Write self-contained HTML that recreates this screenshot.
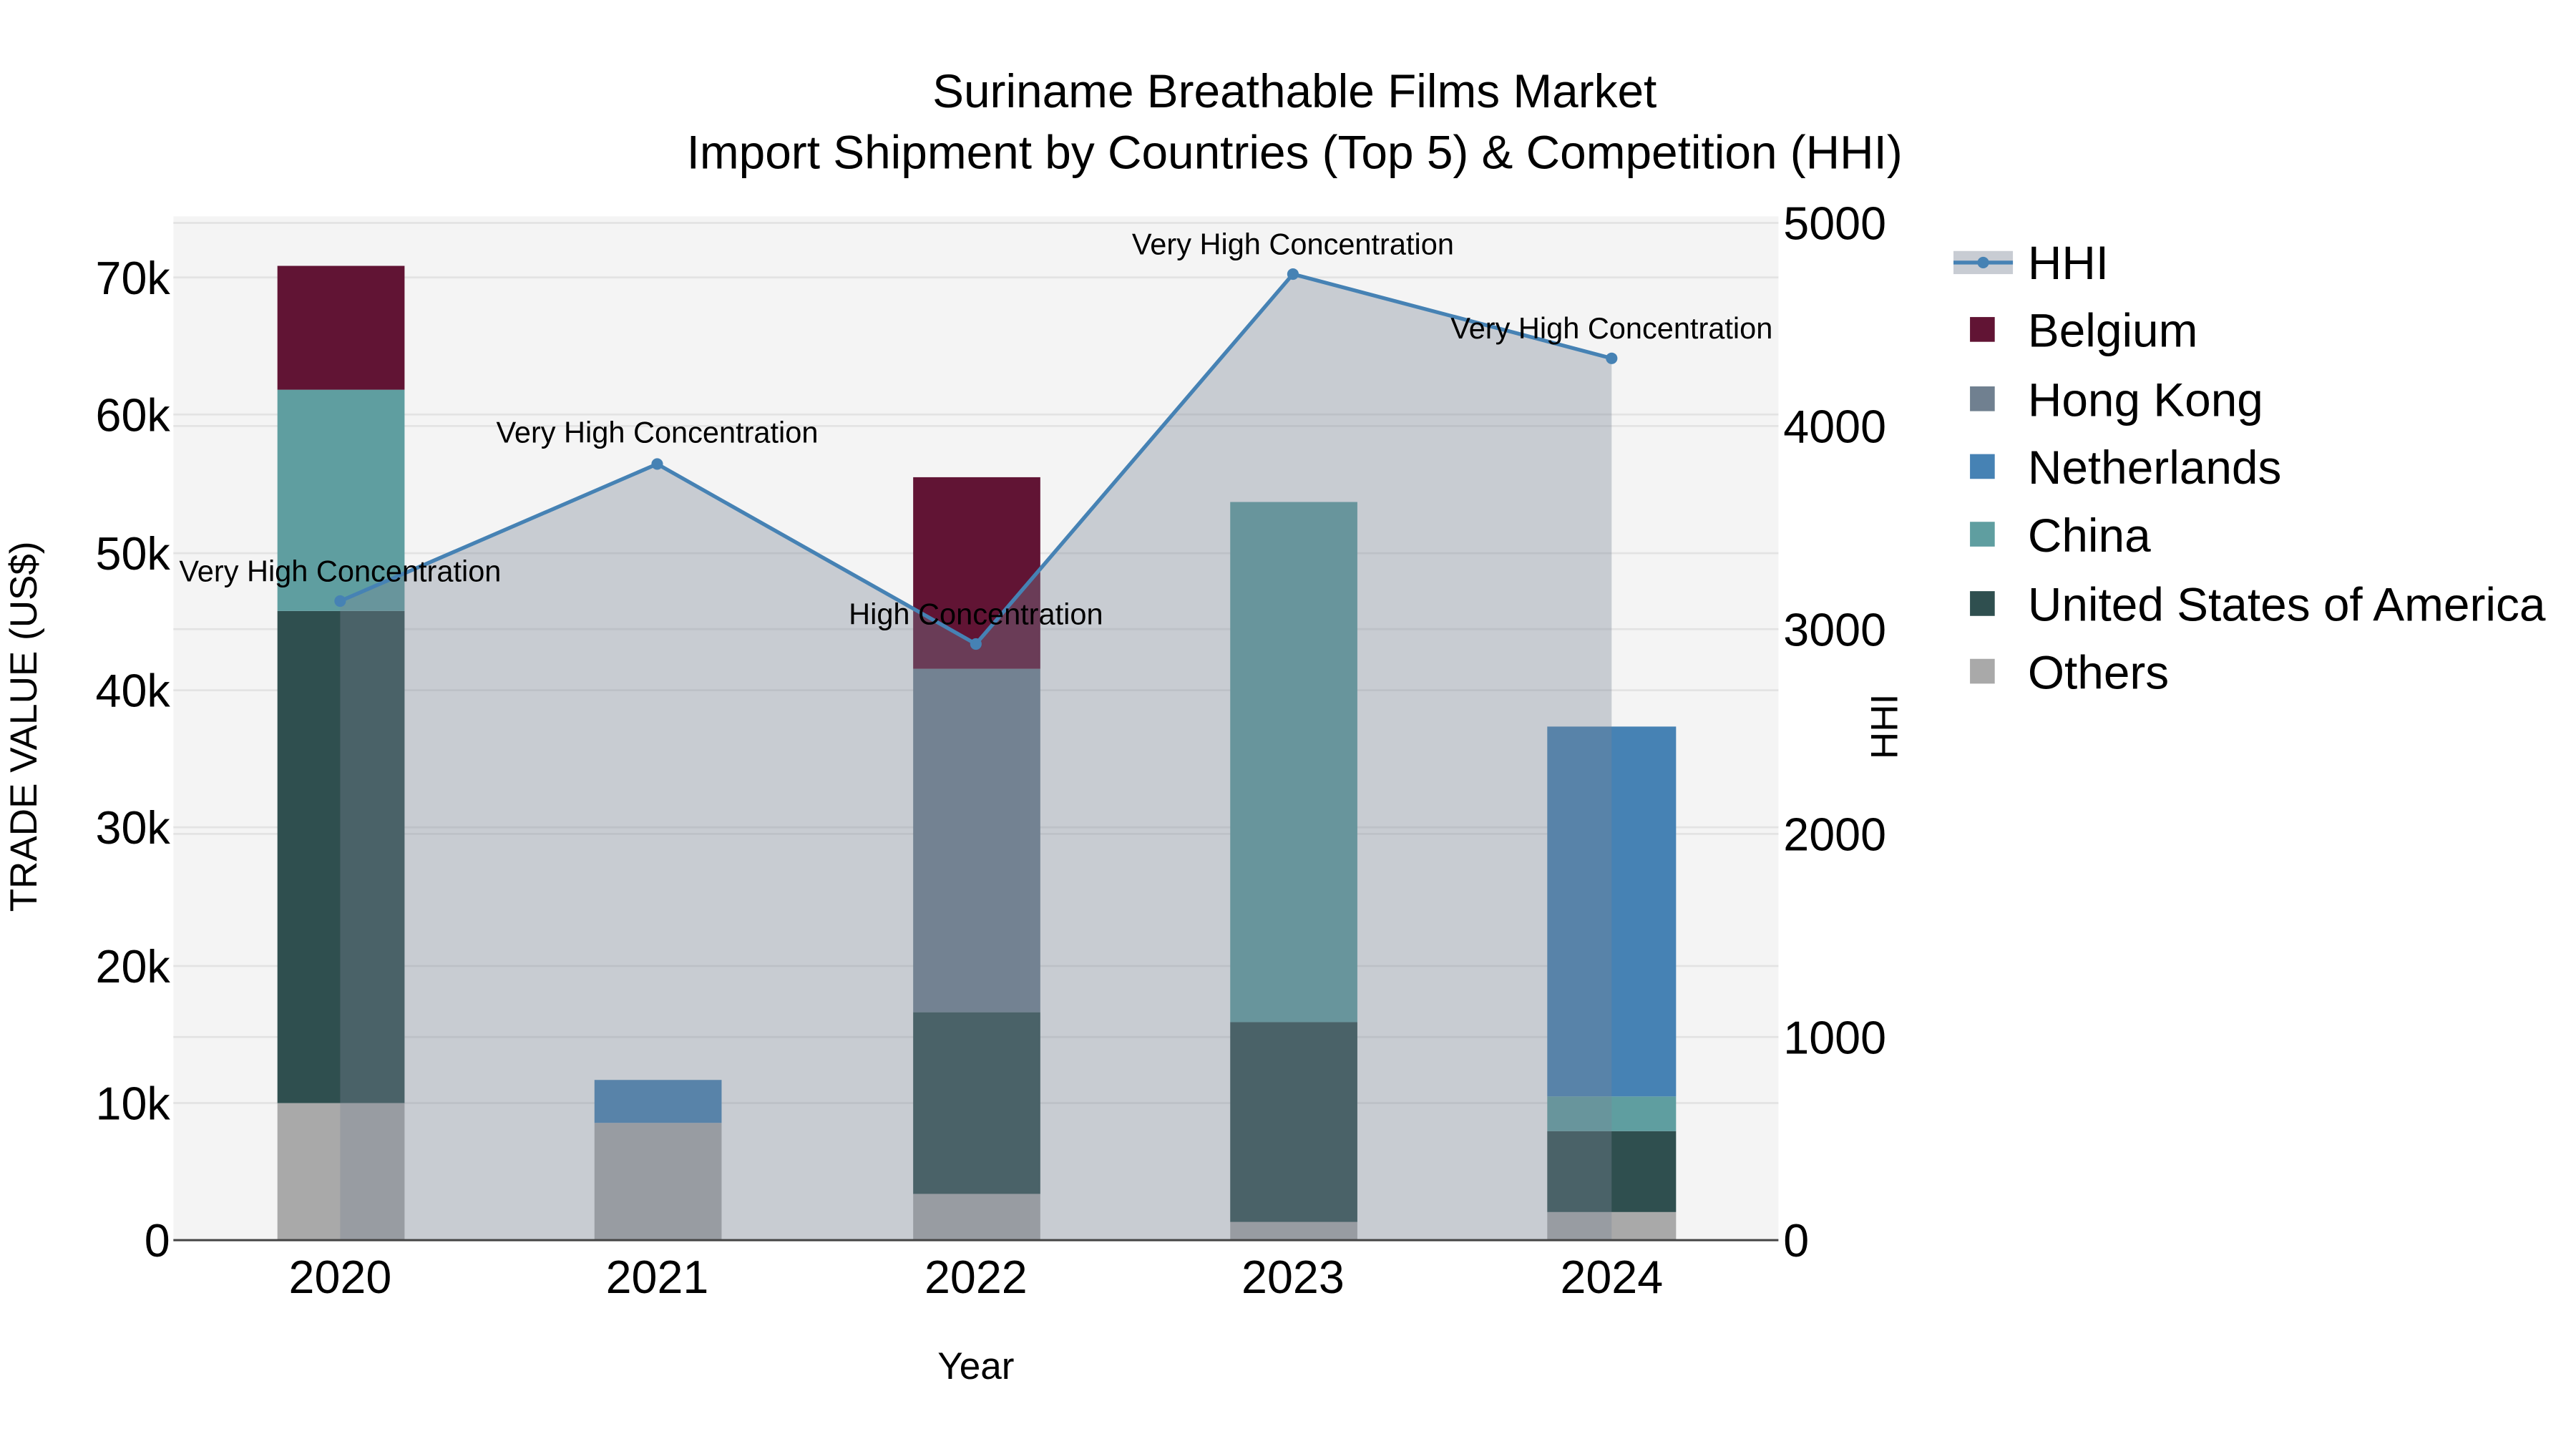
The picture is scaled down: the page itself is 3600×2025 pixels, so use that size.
<!DOCTYPE html>
<html><head><meta charset="utf-8"><style>html,body{margin:0;padding:0;background:#fff}svg{display:block}</style></head>
<body>
<svg width="3600" height="2025" viewBox="0 0 1560 877.5" xmlns="http://www.w3.org/2000/svg" font-family="'Liberation Sans', sans-serif">
<rect width="1560" height="877.5" fill="#fff"/>
<rect x="105" y="131" width="972" height="620" fill="#f4f4f4"/>
<g stroke="#e3e3e3" stroke-width="1.2">
<line x1="105" x2="1077" y1="668" y2="668"/><line x1="105" x2="1077" y1="585" y2="585"/><line x1="105" x2="1077" y1="501" y2="501"/><line x1="105" x2="1077" y1="418" y2="418"/><line x1="105" x2="1077" y1="335" y2="335"/><line x1="105" x2="1077" y1="251" y2="251"/><line x1="105" x2="1077" y1="168" y2="168"/>
<line x1="105" x2="1077" y1="628" y2="628"/><line x1="105" x2="1077" y1="505" y2="505"/><line x1="105" x2="1077" y1="381" y2="381"/><line x1="105" x2="1077" y1="258" y2="258"/><line x1="105" x2="1077" y1="135" y2="135"/>
</g>
<rect x="168" y="668" width="77" height="83" fill="#a9a9a9"/>
<rect x="168" y="370" width="77" height="298" fill="#2f4f4f"/>
<rect x="168" y="236" width="77" height="134" fill="#5f9ea0"/>
<rect x="168" y="161" width="77" height="75" fill="#611434"/>
<rect x="360" y="680" width="77" height="71" fill="#a9a9a9"/>
<rect x="360" y="654" width="77" height="26" fill="#4682b4"/>
<rect x="553" y="723" width="77" height="28" fill="#a9a9a9"/>
<rect x="553" y="613" width="77" height="110" fill="#2f4f4f"/>
<rect x="553" y="405" width="77" height="208" fill="#708090"/>
<rect x="553" y="289" width="77" height="116" fill="#611434"/>
<rect x="745" y="740" width="77" height="11" fill="#a9a9a9"/>
<rect x="745" y="619" width="77" height="121" fill="#2f4f4f"/>
<rect x="745" y="304" width="77" height="315" fill="#5f9ea0"/>
<rect x="937" y="734" width="78" height="17" fill="#a9a9a9"/>
<rect x="937" y="685" width="78" height="49" fill="#2f4f4f"/>
<rect x="937" y="664" width="78" height="21" fill="#5f9ea0"/>
<rect x="937" y="440" width="78" height="224" fill="#4682b4"/>
<polygon points="206,751 206,364 398,281 591,390 783,166 976,217 976,751" fill="rgb(122,132,150)" fill-opacity="0.36"/>
<line x1="105" x2="1077" y1="751" y2="751" stroke="#444" stroke-width="1.3"/>
<polyline points="206,364 398,281 591,390 783,166 976,217" fill="none" stroke="#4682b4" stroke-width="2.3"/>
<g fill="#4682b4"><circle cx="206" cy="364" r="3.5"/><circle cx="398" cy="281" r="3.5"/><circle cx="591" cy="390" r="3.5"/><circle cx="783" cy="166" r="3.5"/><circle cx="976" cy="217" r="3.5"/></g>
<g font-size="18" text-anchor="middle" fill="#000">
<text x="206" y="352">Very High Concentration</text>
<text x="398" y="268">Very High Concentration</text>
<text x="591" y="378">High Concentration</text>
<text x="783" y="154">Very High Concentration</text>
<text x="976" y="205">Very High Concentration</text>
</g>
<g font-size="28.5" fill="#000">
<text x="784" y="65" text-anchor="middle">Suriname Breathable Films Market</text>
<text x="784" y="102" text-anchor="middle">Import Shipment by Countries (Top 5) &amp; Competition (HHI)</text>
</g>
<g font-size="28" text-anchor="end" fill="#000">
<text x="103" y="761">0</text><text x="103" y="678">10k</text><text x="103" y="595">20k</text><text x="103" y="511">30k</text><text x="103" y="428">40k</text><text x="103" y="345">50k</text><text x="103" y="261">60k</text><text x="103" y="178">70k</text>
</g>
<g font-size="28" fill="#000">
<text x="1080" y="761">0</text><text x="1080" y="638">1000</text><text x="1080" y="515">2000</text><text x="1080" y="391">3000</text><text x="1080" y="268">4000</text><text x="1080" y="145">5000</text>
</g>
<g font-size="28" text-anchor="middle" fill="#000">
<text x="206" y="783">2020</text><text x="398" y="783">2021</text><text x="591" y="783">2022</text><text x="783" y="783">2023</text><text x="976" y="783">2024</text>
</g>
<text x="591" y="835" font-size="23" text-anchor="middle">Year</text>
<text transform="translate(22,440) rotate(-90)" font-size="23" text-anchor="middle">TRADE VALUE (US$)</text>
<text transform="translate(1149,440) rotate(-90)" font-size="23" text-anchor="middle">HHI</text>
<rect x="1183" y="152" width="36" height="14" fill="#c8ccd3"/>
<line x1="1183" x2="1219" y1="159" y2="159" stroke="#4682b4" stroke-width="2.3"/>
<circle cx="1201" cy="159" r="3.5" fill="#4682b4"/>
<rect x="1193" y="192" width="15" height="15" fill="#611434"/>
<rect x="1193" y="234" width="15" height="15" fill="#708090"/>
<rect x="1193" y="275" width="15" height="15" fill="#4682b4"/>
<rect x="1193" y="316" width="15" height="15" fill="#5f9ea0"/>
<rect x="1193" y="358" width="15" height="15" fill="#2f4f4f"/>
<rect x="1193" y="399" width="15" height="15" fill="#a9a9a9"/>
<g font-size="28.5" fill="#000">
<text x="1228" y="169">HHI</text><text x="1228" y="210">Belgium</text><text x="1228" y="252">Hong Kong</text><text x="1228" y="293">Netherlands</text><text x="1228" y="334">China</text><text x="1228" y="376">United States of America</text><text x="1228" y="417">Others</text>
</g>
</svg>
</body></html>
